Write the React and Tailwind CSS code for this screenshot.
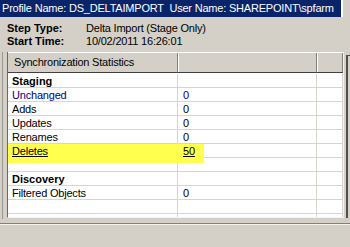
import React from "react";

const rows = [
  { label: "Staging", bold: true },
  { label: "Unchanged", value: "0", navy: true },
  { label: "Adds", value: "0" },
  { label: "Updates", value: "0" },
  { label: "Renames", value: "0" },
  { label: "Deletes", value: "50", link: true },
  {},
  { label: "Discovery", bold: true },
  { label: "Filtered Objects", value: "0" },
  {},
  {},
];

function Row({ label, value, bold, navy, link }) {
  return (
    <div className="flex h-[14px] leading-[14px]">
      <div className="w-[170px] shrink-0 border-r border-b border-[#d8d5cf] pl-[4px]">
        <span
          className={
            "relative z-10 " +
            (bold ? "font-bold tracking-normal text-black " : "") +
            (navy ? "text-[#000080] " : "text-black ") +
            (link ? "underline " : "")
          }
        >
          {label}
        </span>
      </div>
      <div className="w-[139px] shrink-0 border-r border-b border-[#d8d5cf] pl-[5px]">
        <span
          className={
            "relative z-10 " +
            (navy ? "text-[#000080] " : "text-black ") +
            (link ? "underline " : "")
          }
        >
          {value}
        </span>
      </div>
      <div className="w-[26px] shrink-0 border-r border-b border-[#d8d5cf]" />
    </div>
  );
}

export default function App() {
  return (
    <div
      className="w-[350px] h-[247px] overflow-hidden bg-[#d4d0c8] text-[11px] tracking-[-0.2px] text-black flex flex-col"
      style={{ fontFamily: '"Liberation Sans", Arial, sans-serif' }}
    >
      {/* title bar */}
      <div className="h-[17px] shrink-0 flex">
        <div className="w-[341px] bg-[#0a246a] text-white pl-[2px] leading-[17px] whitespace-pre">
          {"Profile Name: DS_DELTAIMPORT  User Name: SHAREPOINT\\spfarm"}
        </div>
        <div className="w-[2px] bg-white" />
      </div>

      {/* step info */}
      <div className="h-[35px] shrink-0 pt-[5px] pl-[7px]">
        <div className="flex h-[13px] leading-[13px]">
          <div className="w-[79px] font-bold tracking-normal">Step Type:</div>
          <div>Delta Import (Stage Only)</div>
        </div>
        <div className="flex h-[13px] leading-[13px]">
          <div className="w-[79px] font-bold tracking-normal">Start Time:</div>
          <div>10/02/2011 16:26:01</div>
        </div>
      </div>

      {/* list area */}
      <div className="h-[167px] shrink-0 flex">
        <div className="w-[2px]" />
        <div className="w-[1px] bg-[#9a9890]" />
        <div className="w-[4px]" />
        <div className="w-[337px] h-[166px] flex flex-col border-l border-[#6a6a6a] border-r border-r-[#f4f3ef] border-b border-b-[#f4f3ef] bg-white">
          {/* header */}
          <div className="h-[21px] shrink-0 flex bg-[#d4d0c8] border-t border-white border-b border-b-[#404040]">
            <div className="w-[170px] shrink-0 border-r border-[#808080] pl-[6px] leading-[19px]">
              Synchronization Statistics
            </div>
            <div className="w-[139px] shrink-0 border-l border-white border-r border-r-[#808080]" />
            <div className="w-[26px] shrink-0 border-l border-white border-r border-r-[#808080]" />
          </div>
          {/* body */}
          <div className="relative flex-1 overflow-hidden pt-[1px]">
            <div className="absolute left-0 top-[71px] w-[196px] h-[19px] bg-[#ffff4d]" />
            {rows.map((r, i) => (
              <Row key={i} {...r} />
            ))}
          </div>
        </div>
        <div className="w-[2px]" />
        <div className="mt-[3px] flex-1 h-[163px] border-l-2 border-t border-[#505050] bg-[#d4d0c8]" />
      </div>

      {/* status */}
      <div className="flex-1 flex flex-col">
        <div className="h-[4px]" />
        <div className="h-[1px] bg-[#808080]" />
        <div className="h-[1px] bg-[#f4f3ef]" />
        <div className="flex-1 bg-[#d4d0c8]" />
      </div>
    </div>
  );
}
